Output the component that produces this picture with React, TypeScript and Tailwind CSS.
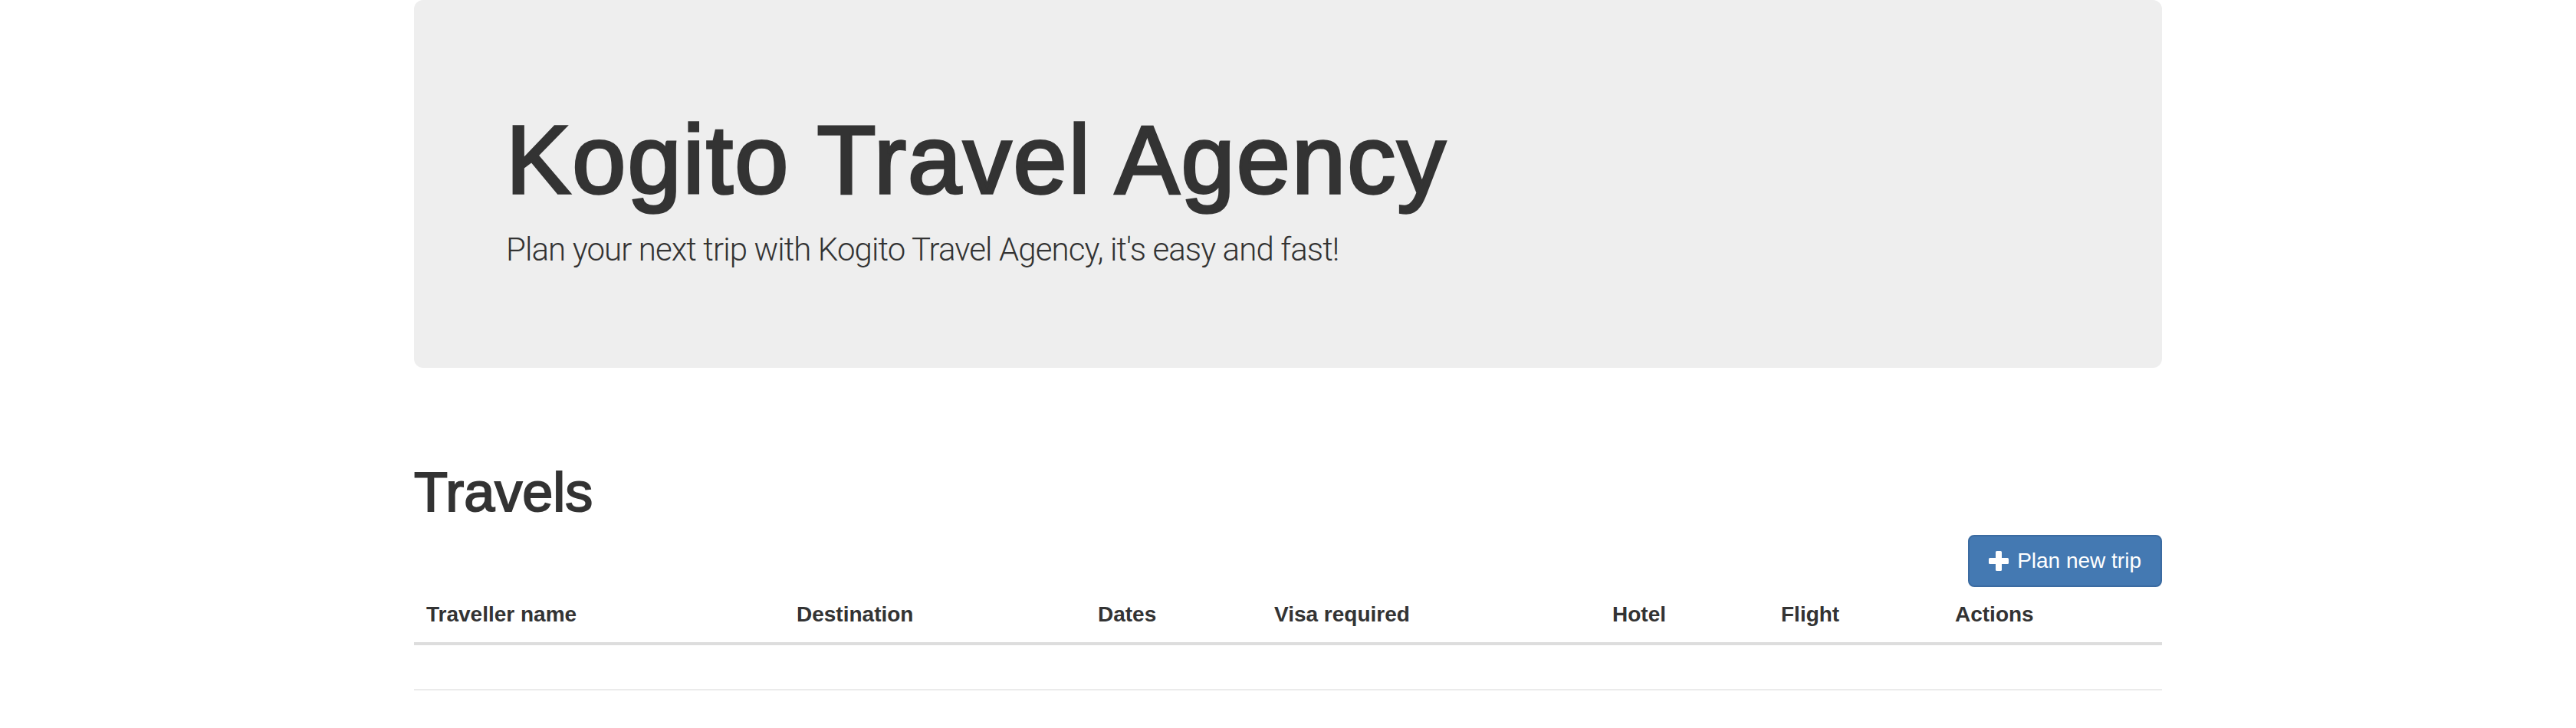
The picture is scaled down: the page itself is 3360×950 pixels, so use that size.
import React from 'react';

const columns = [
    { label: 'Traveller name', width: 'w-[483px]' },
    { label: 'Destination', width: 'w-[393px]' },
    { label: 'Dates', width: 'w-[230px]' },
    { label: 'Visa required', width: 'w-[441px]' },
    { label: 'Hotel', width: 'w-[220px]' },
    { label: 'Flight', width: 'w-[227px]' },
    { label: 'Actions', width: 'w-[286px]' },
];

function PlusIcon() {
    return (
        <svg width="26" height="26" viewBox="0 0 26 26" fill="#fff" aria-hidden="true">
            <rect x="9" y="0" width="8" height="26" rx="1.5" />
            <rect x="0" y="9" width="26" height="8" rx="1.5" />
        </svg>
    );
}

export default function App() {
    return (
        <div className="min-h-[950px] w-full bg-white font-['Liberation_Sans',Arial,sans-serif] text-[#333]">
            <div className="mx-auto w-[2280px]">
                {/* jumbotron */}
                <div className="h-[480px] rounded-[12px] bg-[#eeeeee] px-[120px] pt-[96px]">
                    <h1 className="mt-[44px] text-[126px] leading-[138.6px] tracking-[2.2px] [-webkit-text-stroke:3.5px_#333]">
                        Kogito Travel Agency
                    </h1>
                    <p className="mt-[17px] font-['Roboto','Liberation_Sans',sans-serif] text-[42px] font-light leading-[60px] tracking-[-0.9px]">
                        Plan your next trip with Kogito Travel Agency, it's easy and fast!
                    </p>
                </div>

                <h1 className="mt-[123px] text-[72px] leading-[79.2px] [-webkit-text-stroke:2px_#333]">Travels</h1>

                <div className="mt-[16px] flex justify-end">
                    <button
                        type="button"
                        className="flex h-[68px] items-center gap-[11px] rounded-[8px] border-2 border-[#3b6ba1] bg-[#4479b2] px-[25px] text-[28px] leading-[40px] text-white"
                    >
                        <PlusIcon />
                        <span>Plan new trip</span>
                    </button>
                </div>

                <table className="w-full table-fixed border-collapse">
                    <thead>
                        <tr>
                            {columns.map((c) => (
                                <th
                                    key={c.label}
                                    className={`${c.width} border-b-4 border-[#dddddd] p-[16px] text-left align-bottom text-[28px] font-bold leading-[40px]`}
                                >
                                    {c.label}
                                </th>
                            ))}
                        </tr>
                    </thead>
                    <tbody>
                        <tr>
                            <td colSpan={7} className="h-[60px] border-b-2 border-[#ebebeb] p-0" />
                        </tr>
                    </tbody>
                </table>
            </div>
        </div>
    );
}
